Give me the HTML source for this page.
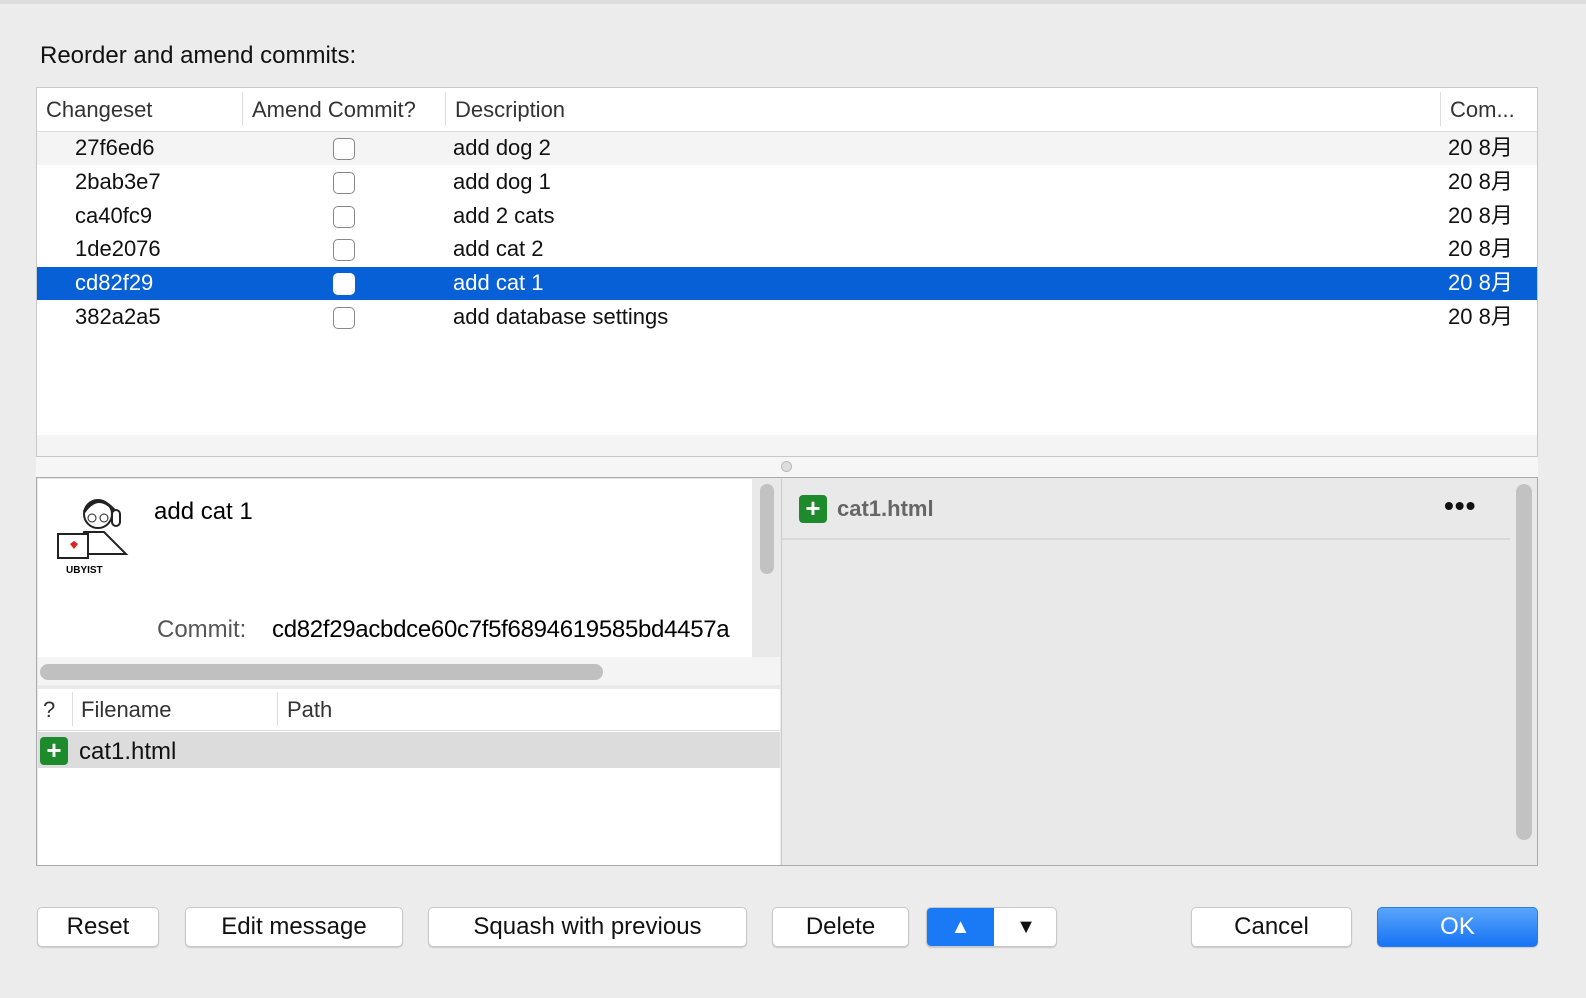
<!DOCTYPE html>
<html><head><style>
*{box-sizing:border-box;margin:0;padding:0}
body{width:1586px;height:998px;background:#ececec;font-family:"Liberation Sans","Noto Sans CJK SC",sans-serif;position:relative;overflow:hidden;color:#111}
.a{position:absolute}
.t{font-size:22px;white-space:nowrap;line-height:26px}
.cb{position:absolute;width:22px;height:22px;border:1px solid #888;border-radius:5px;background:#fff}
.btn{position:absolute;top:907px;height:40px;background:#fff;border:1px solid #c8c8c8;border-radius:5px;font-size:24px;text-align:center;line-height:38px;box-shadow:0 1px 1px rgba(0,0,0,.15)}
.plus{position:absolute;width:28px;height:28px;background:#1d8a2c;border-radius:4px;color:#fff;font-weight:bold;font-size:26px;line-height:27px;text-align:center}
</style></head><body>
<div class="a" style="left:0;top:0;width:1586px;height:4px;background:#ddd"></div>
<div class="a t" style="left:40px;top:43px;font-size:24px">Reorder and amend commits:</div>
<div class="a" style="left:36px;top:87px;width:1502px;height:370px;background:#fff;border:1px solid #c8c8c8"></div>
<div class="a" style="left:37px;top:88px;width:1500px;height:44px;border-bottom:1px solid #ddd"></div>
<div class="a" style="left:242px;top:92px;width:1px;height:34px;background:#ddd"></div>
<div class="a" style="left:445px;top:92px;width:1px;height:34px;background:#ddd"></div>
<div class="a" style="left:1440px;top:92px;width:1px;height:34px;background:#ddd"></div>
<div class="a t" style="left:46px;top:97px;color:#333">Changeset</div>
<div class="a t" style="left:252px;top:97px;color:#333">Amend Commit?</div>
<div class="a t" style="left:455px;top:97px;color:#333">Description</div>
<div class="a t" style="left:1450px;top:97px;color:#333">Com...</div>
<div class="a" style="left:37px;top:132px;width:1500px;height:33px;background:#f4f4f4"></div>
<div class="a" style="left:37px;top:267px;width:1500px;height:33px;background:#0860d6"></div>
<div class="a" style="left:37px;top:435px;width:1500px;height:21px;background:#f4f4f4"></div>
<div class="a t" style="left:75px;top:135px">27f6ed6</div><div class="cb" style="left:333px;top:138px"></div><div class="a t" style="left:453px;top:135px">add dog 2</div><div class="a t" style="left:1448px;top:135px">20 8月</div>
<div class="a t" style="left:75px;top:169px">2bab3e7</div><div class="cb" style="left:333px;top:172px"></div><div class="a t" style="left:453px;top:169px">add dog 1</div><div class="a t" style="left:1448px;top:169px">20 8月</div>
<div class="a t" style="left:75px;top:203px">ca40fc9</div><div class="cb" style="left:333px;top:206px"></div><div class="a t" style="left:453px;top:203px">add 2 cats</div><div class="a t" style="left:1448px;top:203px">20 8月</div>
<div class="a t" style="left:75px;top:236px">1de2076</div><div class="cb" style="left:333px;top:239px"></div><div class="a t" style="left:453px;top:236px">add cat 2</div><div class="a t" style="left:1448px;top:236px">20 8月</div>
<div class="a t" style="left:75px;top:270px;color:#fff">cd82f29</div><div class="cb" style="left:333px;top:273px;border-color:#fff"></div><div class="a t" style="left:453px;top:270px;color:#fff">add cat 1</div><div class="a t" style="left:1448px;top:270px;color:#fff">20 8月</div>
<div class="a t" style="left:75px;top:304px">382a2a5</div><div class="cb" style="left:333px;top:307px"></div><div class="a t" style="left:453px;top:304px">add database settings</div><div class="a t" style="left:1448px;top:304px">20 8月</div>
<div class="a" style="left:36px;top:457px;width:1502px;height:20px;background:#f6f6f6"></div>
<div class="a" style="left:781px;top:461px;width:11px;height:11px;border-radius:50%;background:#ddd;border:1px solid #bbb"></div>
<div class="a" style="left:36px;top:477px;width:1502px;height:389px;border:1px solid #aaa;background:#e9e9e9"></div>
<div class="a" style="left:38px;top:479px;width:714px;height:178px;background:#fff"></div>
<svg class="a" style="left:54px;top:492px" width="80" height="82"><circle cx="44" cy="22" r="14" fill="none" stroke="#222" stroke-width="2"/><path d="M30 20 Q44 0 60 18" stroke="#222" stroke-width="3" fill="none"/><circle cx="38" cy="26" r="4" fill="none" stroke="#222"/><circle cx="50" cy="26" r="4" fill="none" stroke="#222"/><rect x="58" y="18" width="8" height="16" rx="4" fill="none" stroke="#222" stroke-width="2"/><path d="M30 40 L50 40 L72 62 L26 62 Z" fill="none" stroke="#222" stroke-width="2"/><rect x="4" y="42" width="30" height="24" fill="#fff" stroke="#222" stroke-width="2"/><path d="M16 52 l4 -3 4 3 -4 5z" fill="#d22"/><text x="12" y="81" font-size="10" font-weight="bold" font-family="Liberation Sans">UBYIST</text></svg>
<div class="a t" style="left:154px;top:499px;font-size:24px;color:#000">add cat 1</div>
<div class="a t" style="left:157px;top:617px;font-size:24px;color:#555">Commit:</div>
<div class="a" style="left:272px;top:617px;width:480px;overflow:hidden;font-size:24px;line-height:26px;white-space:nowrap;color:#000;letter-spacing:-0.3px">cd82f29acbdce60c7f5f6894619585bd4457a</div>
<div class="a" style="left:760px;top:484px;width:14px;height:90px;border-radius:7px;background:#c2c2c2"></div>
<div class="a" style="left:38px;top:657px;width:742px;height:28px;background:#f4f4f4"></div>
<div class="a" style="left:40px;top:664px;width:563px;height:16px;border-radius:8px;background:#c0c0c0"></div>
<div class="a" style="left:38px;top:689px;width:742px;height:176px;background:#fff"></div>
<div class="a" style="left:38px;top:689px;width:742px;height:42px;border-bottom:1px solid #ddd"></div>
<div class="a" style="left:72px;top:692px;width:1px;height:34px;background:#ddd"></div>
<div class="a" style="left:277px;top:692px;width:1px;height:34px;background:#ddd"></div>
<div class="a t" style="left:43px;top:697px;color:#333">?</div>
<div class="a t" style="left:81px;top:697px;color:#333">Filename</div>
<div class="a t" style="left:287px;top:697px;color:#333">Path</div>
<div class="a" style="left:38px;top:732px;width:742px;height:36px;background:#dcdcdc"></div>
<div class="plus" style="left:40px;top:737px">+</div>
<div class="a t" style="left:79px;top:739px;font-size:24px">cat1.html</div>
<div class="a" style="left:781px;top:479px;width:1px;height:386px;background:#ccc"></div>
<div class="a" style="left:782px;top:538px;width:728px;height:2px;background:#d8d8d8"></div>
<div class="plus" style="left:799px;top:495px">+</div>
<div class="a t" style="left:837px;top:496px;font-weight:bold;color:#666">cat1.html</div>
<div class="a" style="left:1444px;top:490px;font-size:28px;font-weight:bold;letter-spacing:1px">•••</div>
<div class="a" style="left:1516px;top:484px;width:16px;height:356px;border-radius:8px;background:#c2c2c2"></div>
<div class="btn" style="left:37px;width:122px">Reset</div>
<div class="btn" style="left:185px;width:218px">Edit message</div>
<div class="btn" style="left:428px;width:319px">Squash with previous</div>
<div class="btn" style="left:772px;width:137px">Delete</div>
<div class="btn" style="left:926px;width:131px;overflow:hidden"><div class="a" style="left:0;top:0;width:67px;height:40px;background:#1a7af6;color:#fff;font-size:20px">▲</div><div class="a" style="left:67px;top:0;width:64px;height:40px;font-size:20px">▼</div></div>
<div class="btn" style="left:1191px;width:161px">Cancel</div>
<div class="btn" style="left:1377px;width:161px;background:linear-gradient(#5aa6fb,#1673f5);color:#fff;border-color:#2a7be8">OK</div>
</body></html>
